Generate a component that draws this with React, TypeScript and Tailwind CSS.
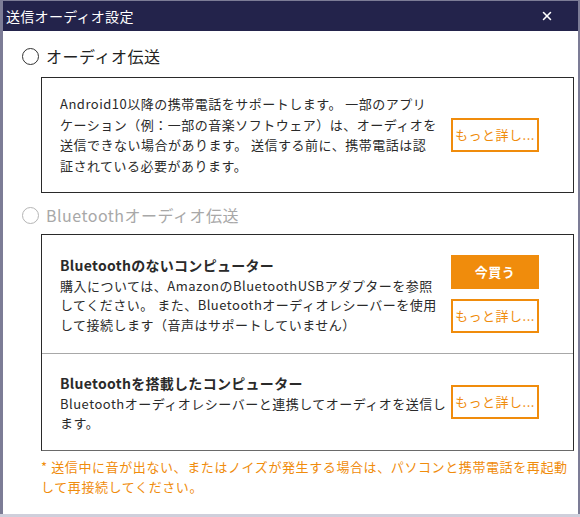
import React from 'react';
import { X } from 'lucide-react';

const font = { fontFamily: '"Noto Sans CJK JP", "Noto Sans", sans-serif' };

const MoreButton: React.FC = () => (
  <button className="w-[88px] h-[34px] border-2 border-[#f08c0c] text-[#f08c0c] text-[13px] tracking-[0.5px] flex items-center justify-center bg-white">
    もっと詳し...
  </button>
);

const Radio: React.FC<{ label: string; disabled?: boolean }> = ({ label, disabled }) => (
  <div className={`flex items-center h-[30px] pl-[19px] ${disabled ? 'text-[#a8a8a8]' : 'text-[#222]'}`}>
    <span
      className={`w-[17px] h-[17px] rounded-full border ${
        disabled ? 'border-[#b5b5b5]' : 'border-[#333]'
      } bg-white`}
    />
    <span className="ml-[7px] text-[16px] tracking-[0.5px]">{label}</span>
  </div>
);

export default function App() {
  return (
    <div className="w-[580px] h-[517px] bg-[#cfcfdb]" style={font}>
      <div className="h-[514px] bg-white border-l-[3px] border-r-[2px] border-t border-[#7c7c96] flex flex-col">
        {/* タイトルバー */}
        <div className="h-[30px] bg-[#23234b] flex items-center pl-[3px] pr-[24px] text-white">
          <span className="text-[14px] tracking-[0.3px]">送信オーディオ設定</span>
          <X className="ml-auto w-[14px] h-[14px]" strokeWidth={2.6} />
        </div>

        <div className="flex-1 flex flex-col pr-[4px]">
          <div className="mt-[10px]">
            <Radio label="オーディオ伝送" />
          </div>

          <div className="ml-[38px] mt-[6px] h-[116px] border border-[#2a2a2a] flex items-center pl-[18px] pr-[34px]">
            <p className="text-[13px] leading-[20.5px] tracking-[0.5px] text-[#2a2a2a] whitespace-nowrap">
              Android10以降の携帯電話をサポートします。 一部のアプリ
              <br />
              ケーション（例：一部の音楽ソフトウェア）は、オーディオを
              <br />
              送信できない場合があります。 送信する前に、携帯電話は認
              <br />
              証されている必要があります。
            </p>
            <div className="ml-auto">
              <MoreButton />
            </div>
          </div>

          <div className="mt-[7px]">
            <Radio label="Bluetoothオーディオ伝送" disabled />
          </div>

          <div className="ml-[38px] mt-[4px] border-t border-x border-[#2a2a2a] border-b-[#6a6a6a] border-b">
            <div className="h-[119px] flex items-center pl-[18px] pr-[34px] border-b border-[#a8a8a8]">
              <div className="text-[#2a2a2a] whitespace-nowrap">
                <div className="text-[14px] font-bold leading-[22px] tracking-[0.3px]">
                  Bluetoothのないコンピューター
                </div>
                <p className="text-[13px] leading-[19.5px] tracking-[0.5px]">
                  購入については、AmazonのBluetoothUSBアダプターを参照
                  <br />
                  してください。 また、Bluetoothオーディオレシーバーを使用
                  <br />
                  して接続します（音声はサポートしていません）
                </p>
              </div>
              <div className="ml-auto flex flex-col gap-[10px]">
                <button className="w-[88px] h-[34px] bg-[#f08c0c] text-white text-[13px] font-bold tracking-[0.5px] flex items-center justify-center">
                  今買う
                </button>
                <MoreButton />
              </div>
            </div>
            <div className="h-[96px] flex items-center pl-[18px] pr-[34px]">
              <div className="text-[#2a2a2a] whitespace-nowrap">
                <div className="text-[14px] font-bold leading-[22px] tracking-[0.3px]">
                  Bluetoothを搭載したコンピューター
                </div>
                <p className="text-[13px] leading-[19.5px] tracking-[0.5px]">
                  Bluetoothオーディオレシーバーと連携してオーディオを送信し
                  <br />
                  ます。
                </p>
              </div>
              <div className="ml-auto">
                <MoreButton />
              </div>
            </div>
          </div>

          <p className="ml-[38px] mt-[6px] text-[13px] leading-[19.5px] tracking-[0.6px] text-[#f08c0c] whitespace-nowrap">
            * 送信中に音が出ない、またはノイズが発生する場合は、パソコンと携帯電話を再起動
            <br />
            して再接続してください。
          </p>
        </div>
      </div>
    </div>
  );
}
